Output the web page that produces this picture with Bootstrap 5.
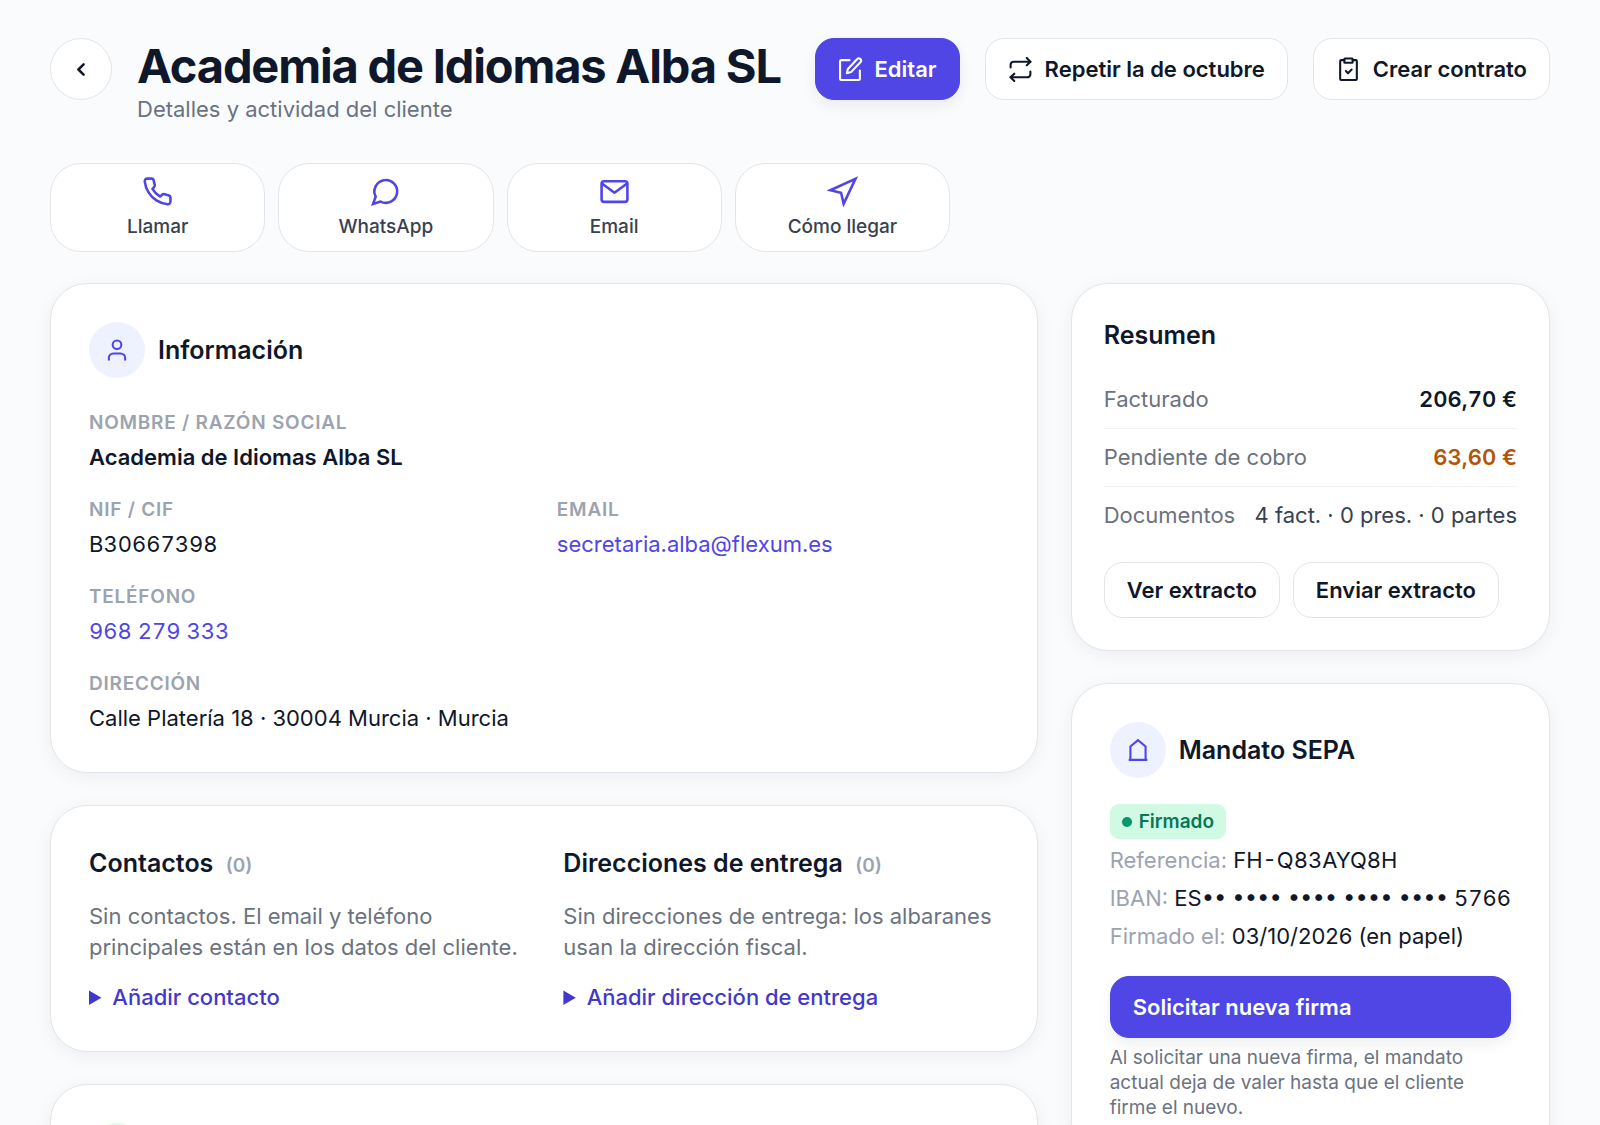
<!DOCTYPE html>
<html lang="es">
<head>
<meta charset="utf-8">
<meta name="viewport" content="width=device-width, initial-scale=1">
<title>Academia de Idiomas Alba SL</title>
<link href="https://cdn.jsdelivr.net/npm/bootstrap@5.3.0/dist/css/bootstrap.min.css" rel="stylesheet">
<style>
:root{--ink:#0f172a;--brand:#4f46e5;--brand-dark:#4338ca;--line:#e3e5e9;--muted:#6b7280;--faint:#9ca3af}
body{font-family:Inter,"Liberation Sans",sans-serif;font-size:22px;line-height:31px;color:var(--ink);background:#fafbfd}
h1,h2,p,dl,dd{margin:0}
svg{fill:none;stroke:currentColor;stroke-width:2;stroke-linecap:round;stroke-linejoin:round;flex:none}
.page-shell{padding:38px 50px}
.page-head{gap:25px}
.page-title{font-size:47px;line-height:56px;font-weight:700;letter-spacing:-0.025em}
.soft{color:var(--muted)}
.ui-btn{font-size:22px;line-height:32px;font-weight:600;border-radius:19px;padding:14px 22px;border:1px solid var(--line);background:#fff;color:var(--ink);display:inline-flex;align-items:center;gap:12px;white-space:nowrap}
.ui-btn:hover{background:#f8fafc;border-color:var(--line);color:var(--ink)}
.ui-main,.ui-main:hover{background:var(--brand);border-color:var(--brand);color:#fff;box-shadow:0 6px 14px rgba(15,23,42,.07)}
.ui-small{padding:11px 22px}
.round-back{width:62px;height:62px;border-radius:50%;padding:0;justify-content:center;flex:none}
.quick-row{display:grid;grid-template-columns:repeat(4,1fr);gap:13px;width:60%;margin-top:38px}
.quick-link{background:#fff;border:1px solid var(--line);border-radius:31px;padding:12px;display:flex;flex-direction:column;align-items:center;gap:7px;font-size:19px;line-height:25px;font-weight:500;color:#374151;text-decoration:none}
.quick-link svg{color:var(--brand)}
.board{display:grid;grid-template-columns:988fr 479fr;gap:33px;margin-top:31px;align-items:start}
.stack{display:grid;gap:32px}
.panel{background:#fff;border:1px solid var(--line);border-radius:37px;padding:38px;box-shadow:0 4px 18px rgba(15,23,42,.055)}
.panel-tight{padding:32px}
.panel-head{gap:13px}
.panel-title{font-size:25px;line-height:38px;font-weight:600}
.disc{width:56px;height:56px;border-radius:50%;background:#eef2ff;color:var(--brand);display:flex;align-items:center;justify-content:center;flex:none}
.disc-green{background:#dffbec}
.thin-icon{stroke-width:1.8;stroke-linecap:butt}
.fields{display:grid;grid-template-columns:1fr 1fr;gap:24px 26px;margin-top:32px}
.wide{grid-column:1/-1}
.fields dt{font-size:19px;line-height:25px;font-weight:600;color:var(--faint);letter-spacing:0.04em;text-transform:uppercase;margin-bottom:7px}
.tab-num{font-variant-numeric:tabular-nums}
.fields a{color:var(--brand);text-decoration:none}
.pair{display:grid;grid-template-columns:1fr 1fr;gap:39px}
.count{font-size:19px;font-weight:600;color:var(--faint);margin-left:6px}
.note{color:var(--muted);margin-top:16px}
summary{color:var(--brand-dark);font-weight:500;margin-top:19px}
.sum-list{margin:17px 0 18px}
.sum-row{display:flex;justify-content:space-between;padding:13px 0;border-bottom:1px solid #f3f4f6}
.sum-row:last-child{border-bottom:0}
.sum-row dt{font-weight:400;color:var(--muted)}
.sum-row dd{font-weight:600}
.due{color:#b45309}
.doc-count{color:#374151}
.pill{display:flex;width:fit-content;align-items:center;gap:7px;background:#d1fae5;color:#047857;border-radius:9px;padding:5px 12px;font-size:19px;line-height:25px;font-weight:600;margin-top:26px}
.pill i{width:10px;height:10px;border-radius:50%;background:#059669}
.kv-list{margin:2px 0 21px}
.kv{line-height:38px;white-space:nowrap}
.kv dt{font-weight:400;color:var(--faint);display:inline}
.kv dd{display:inline}
.hint{font-size:19px;line-height:25px;color:var(--muted);margin-top:7px}
@media(max-width:1100px){.board,.pair{grid-template-columns:1fr}.page-head{flex-wrap:wrap}.quick-row{width:100%}}
</style>
</head>
<body>
<main class="page-shell">
  <header class="page-head d-flex align-items-start">
    <a class="btn ui-btn round-back" href="#" aria-label="Volver"><svg width="25" height="25" viewBox="0 0 24 24"><path d="M14 7l-5 5 5 5" stroke-width="2.4"/></svg></a>
    <div class="flex-grow-1">
      <h1 class="page-title text-nowrap">Academia de Idiomas Alba SL</h1>
      <p class="soft">Detalles y actividad del cliente</p>
    </div>
    <button type="button" class="btn ui-btn ui-main"><svg width="25" height="25" viewBox="0 0 24 24"><path d="M11 3H3a1 1 0 0 0-1 1v17a1 1 0 0 0 1 1h17a1 1 0 0 0 1-1v-8"/><path d="M18.500 2a2.100 2.100 0 0 1 3 3L12.500 14.500l-4 1 1-4z"/></svg>Editar</button>
    <button type="button" class="btn ui-btn"><svg width="25" height="25" viewBox="0 0 24 24"><path d="M18 1l3.500 3.500L18 8"/><path d="M2.500 10V7.500a3 3 0 0 1 3-3h16"/><path d="M6 23l-3.500-3.500L6 16"/><path d="M21.500 14v2.500a3 3 0 0 1-3 3h-16"/></svg>Repetir la de octubre</button>
    <button type="button" class="btn ui-btn"><svg width="25" height="25" viewBox="0 0 24 24"><path d="M16 3h3a1 1 0 0 1 1 1v17a1 1 0 0 1-1 1H5a1 1 0 0 1-1-1V4a1 1 0 0 1 1-1h3"/><rect x="8" y="1.500" width="8" height="4" rx="0.500"/><path d="M9.500 13.500l2 2 3.500-3.500"/></svg>Crear contrato</button>
  </header>

  <nav class="quick-row" aria-label="Acciones rápidas">
    <a class="quick-link" href="#"><svg width="31" height="31" viewBox="0 0 24 24"><path d="M22 16.920v3a2 2 0 0 1-2.180 2 19.790 19.790 0 0 1-8.630-3.070 19.500 19.500 0 0 1-6-6 19.790 19.790 0 0 1-3.070-8.670A2 2 0 0 1 4.110 2h3a2 2 0 0 1 2 1.720 12.840 12.840 0 0 0 .7 2.810 2 2 0 0 1-.45 2.110L8.090 9.910a16 16 0 0 0 6 6l1.270-1.270a2 2 0 0 1 2.110-.45 12.840 12.840 0 0 0 2.810.7A2 2 0 0 1 22 16.920z"/></svg>Llamar</a>
    <a class="quick-link" href="#"><svg width="31" height="31" viewBox="0 0 24 24"><path d="M8.200 19.800L2.400 21.600 4.400 16A8.800 8.800 0 1 1 8.200 19.800z" stroke-linejoin="miter"/></svg>WhatsApp</a>
    <a class="quick-link" href="#"><svg width="31" height="31" viewBox="0 0 24 24"><rect x="2" y="4" width="20" height="16" rx="2"/><path d="M2.500 6l9.500 7 9.500-7"/></svg>Email</a>
    <a class="quick-link" href="#"><svg width="31" height="31" viewBox="0 0 24 24"><path d="M22 2.200L12.900 21.500l-2-8.500L2.500 11z" stroke-linejoin="miter"/></svg>Cómo llegar</a>
  </nav>

  <div class="board">
    <div class="stack">
      <section class="panel">
        <div class="panel-head d-flex align-items-center">
          <span class="disc"><svg class="thin-icon" width="28" height="28" viewBox="0 0 24 24"><path d="M5 21v-2a4 4 0 0 1 4-4h6a4 4 0 0 1 4 4v2"/><circle cx="12" cy="7.500" r="3.700"/></svg></span>
          <h2 class="panel-title">Información</h2>
        </div>
        <dl class="fields">
          <div class="wide"><dt>Nombre / Razón social</dt><dd class="fw-semibold">Academia de Idiomas Alba SL</dd></div>
          <div><dt>NIF / CIF</dt><dd class="tab-num">B30667398</dd></div>
          <div><dt>Email</dt><dd><a href="#">secretaria.alba@flexum.es</a></dd></div>
          <div class="wide"><dt>Teléfono</dt><dd class="tab-num"><a href="#">968 279 333</a></dd></div>
          <div class="wide"><dt>Dirección</dt><dd>Calle Platería 18 · 30004 Murcia · Murcia</dd></div>
        </dl>
      </section>
      <section class="panel pair">
        <div>
          <h2 class="panel-title">Contactos <span class="count">(0)</span></h2>
          <p class="note">Sin contactos. El email y teléfono principales están en los datos del cliente.</p>
          <details><summary>Añadir contacto</summary></details>
        </div>
        <div>
          <h2 class="panel-title">Direcciones de entrega <span class="count">(0)</span></h2>
          <p class="note">Sin direcciones de entrega: los albaranes usan la dirección fiscal.</p>
          <details><summary>Añadir dirección de entrega</summary></details>
        </div>
      </section>
      <section class="panel"><span class="disc disc-green"></span></section>
    </div>

    <div class="stack">
      <section class="panel panel-tight">
        <h2 class="panel-title">Resumen</h2>
        <dl class="sum-list">
          <div class="sum-row"><dt>Facturado</dt><dd class="tab-num">206,70 €</dd></div>
          <div class="sum-row"><dt>Pendiente de cobro</dt><dd class="tab-num due">63,60 €</dd></div>
          <div class="sum-row"><dt>Documentos</dt><dd class="fw-normal doc-count">4 fact. · 0 pres. · 0 partes</dd></div>
        </dl>
        <div class="panel-head d-flex flex-wrap">
          <button type="button" class="btn ui-btn ui-small">Ver extracto</button>
          <button type="button" class="btn ui-btn ui-small">Enviar extracto</button>
        </div>
      </section>
      <section class="panel">
        <div class="panel-head d-flex align-items-center">
          <span class="disc"><svg class="thin-icon" width="28" height="28" viewBox="0 0 24 24"><path d="M4 20.500h16M5.500 20.500V9L12 3.500 18.500 9v11.500" stroke-linejoin="miter"/></svg></span>
          <h2 class="panel-title">Mandato SEPA</h2>
        </div>
        <div class="pill"><i></i>Firmado</div>
        <dl class="kv-list">
          <div class="kv"><dt>Referencia:</dt> <dd class="tab-num">FH-Q83AYQ8H</dd></div>
          <div class="kv"><dt>IBAN:</dt> <dd class="tab-num">ES•• •••• •••• •••• •••• 5766</dd></div>
          <div class="kv"><dt>Firmado el:</dt> <dd>03/10/2026 (en papel)</dd></div>
        </dl>
        <button type="button" class="btn ui-btn ui-main w-100">Solicitar nueva firma</button>
        <p class="hint">Al solicitar una nueva firma, el mandato actual deja de valer hasta que el cliente firme el nuevo.</p>
      </section>
    </div>
  </div>
</main>
<script src="https://cdn.jsdelivr.net/npm/bootstrap@5.3.0/dist/js/bootstrap.bundle.min.js"></script>
</body>
</html>
